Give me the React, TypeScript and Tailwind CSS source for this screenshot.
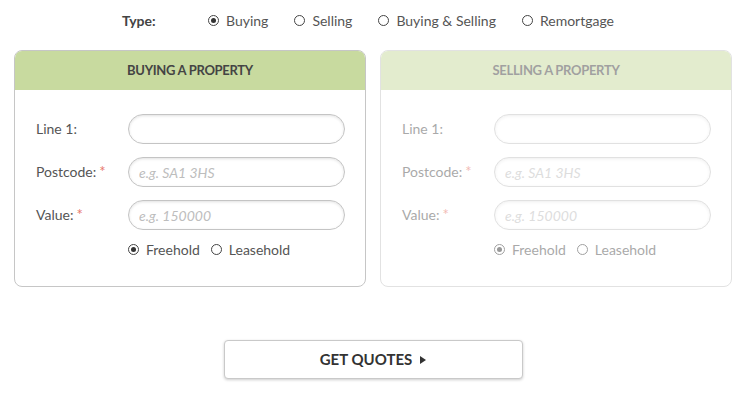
import React from 'react';

const Radio: React.FC<{ checked?: boolean; label: string; className?: string }> = ({ checked, label, className }) => (
  <label className={`flex items-center gap-[7px] ${className ?? ''}`}>
    <span className="w-[11px] h-[11px] rounded-full border border-[#444] bg-white flex items-center justify-center">
      {checked && <span className="w-[5px] h-[5px] rounded-full bg-[#333]" />}
    </span>
    <span>{label}</span>
  </label>
);

const Field: React.FC<{ label: string; required?: boolean; placeholder?: string }> = ({ label, required, placeholder }) => (
  <div className="flex items-center h-[30px]">
    <div className="w-[92px] shrink-0 text-[#555] -mt-[2px]">
      {label}
      {required && <span className="text-[#e8786b] ml-[3px] text-[15px]">*</span>}
    </div>
    <input
      className="w-[217px] h-[30px] rounded-full border border-[#c4c4c4] bg-white px-[10px] shadow-[inset_0_1px_3px_rgba(0,0,0,0.12)] outline-none placeholder:italic placeholder:text-[#bdbdbd]"
      placeholder={placeholder}
    />
  </div>
);

const PropertyCard: React.FC<{ title: string; faded?: boolean }> = ({ title, faded }) => (
  <div className={`w-[352px] h-[237px] rounded-[8px] border border-[#c6c6c6] bg-white overflow-hidden ${faded ? 'opacity-50' : ''}`}>
    <div className="h-[39px] bg-[#c8da9f] flex items-center justify-center font-bold text-[#444] uppercase text-[13px] tracking-[-0.3px]">
      {title}
    </div>
    <div className="pl-[21px] pt-[24px] flex flex-col gap-[13px]">
      <Field label="Line 1:" />
      <Field label="Postcode:" required placeholder="e.g. SA1 3HS" />
      <Field label="Value:" required placeholder="e.g. 150000" />
      <div className="flex items-center gap-[11px] pl-[92px] text-[#555] -mt-[4px]">
        <Radio checked label="Freehold" />
        <Radio label="Leasehold" />
      </div>
    </div>
  </div>
);

export default function App() {
  return (
    <div className="w-[750px] h-[402px] bg-white text-[14px] text-[#555]" style={{ fontFamily: 'Lato, "Open Sans", sans-serif' }}>
      <div className="flex items-center h-[41px] pl-[122px] text-[#555]">
        <span className="font-bold text-[#444] w-[86px]">Type:</span>
        <div className="flex items-center gap-[26px]">
          <Radio checked label="Buying" />
          <Radio label="Selling" />
          <Radio label="Buying &amp; Selling" />
          <Radio label="Remortgage" />
        </div>
      </div>
      <div className="flex gap-[14px] pl-[14px] mt-[9px]">
        <PropertyCard title="Buying a property" />
        <PropertyCard title="Selling a property" faded />
      </div>
      <div className="flex justify-center mt-[53px]">
        <button className="w-[299px] h-[39px] ml-[-4px] rounded-[4px] border border-[#c9c9c9] bg-white shadow-[0_1px_3px_rgba(0,0,0,0.2)] flex items-center justify-center gap-[8px] font-bold text-[15px] text-[#333]">
          GET QUOTES
          <svg width="6" height="8" viewBox="0 0 6 8"><path d="M0 0 L6 4 L0 8 Z" fill="#333" /></svg>
        </button>
      </div>
    </div>
  );
}
